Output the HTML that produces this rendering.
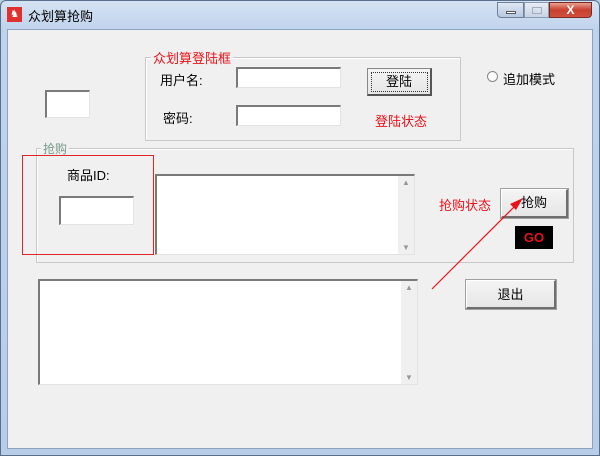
<!DOCTYPE html>
<html><head><meta charset="utf-8"><style>
*{margin:0;padding:0;box-sizing:border-box}
body{width:600px;height:456px;overflow:hidden;background:#bcd1ea;font-family:"Liberation Sans","Noto Sans CJK SC",sans-serif;font-size:12px;color:#000;position:relative}
.a{position:absolute}
.frame{left:0;top:0;width:600px;height:456px;background:linear-gradient(#d5e3f3,#bfd3ec 30px,#b8cde8);border:1px solid #5a6f8c;border-radius:6px 6px 0 0}
.client{left:7px;top:29px;width:586px;height:420px;background:#f0f0f0;border:1px solid #8ea3bf}
.inp{background:#fff;border-top:2px solid #7a7a7a;border-left:2px solid #7a7a7a;border-right:1px solid #e3e3e3;border-bottom:1px solid #e3e3e3}
.grp{border:1px solid #c8c8c8;box-shadow:1px 1px 0 #fff inset}
.btn{background:linear-gradient(#f4f4f4,#e6e6e6);border:1px solid #fff;border-right:2px solid #6e6e6e;border-bottom:2px solid #6e6e6e;outline:1px solid #a0a0a0;text-align:center;font-size:13px}
.red{color:#e8121a}
.sb{right:0;top:0;bottom:0;width:16px;background:#f0f0f0;font-size:8px;color:#999;text-align:center}
</style></head><body>
<div class="a frame"></div>
<div class="a" style="left:7px;top:7px;width:15px;height:15px;background:#e03030;color:#fff;font-size:10px;text-align:center;line-height:15px">♞</div>
<div class="a" style="left:28px;top:6px;font-size:13px">众划算抢购</div>
<div class="a" style="left:497px;top:2px;width:27px;height:16px;border:1px solid #6d7f99;border-radius:0 0 0 4px;background:linear-gradient(#dfe8f4,#b7c8df)"><div class="a" style="left:8px;top:8px;width:10px;height:3px;background:#fff;border:1px solid #556"></div></div>
<div class="a" style="left:524px;top:2px;width:25px;height:16px;border:1px solid #8a9ab0;background:linear-gradient(#e6edf6,#c6d4e6)"><div class="a" style="left:7px;top:4px;width:10px;height:7px;border:1px solid #aab"></div></div>
<div class="a" style="left:549px;top:2px;width:43px;height:16px;border:1px solid #7a2a20;border-radius:0 0 4px 0;background:linear-gradient(#e8a090,#c8402e 50%,#d05040);color:#fff;font-weight:bold;text-align:center;line-height:14px;font-size:12px">X</div>
<div class="a client"></div>

<div class="a inp" style="left:45px;top:90px;width:45px;height:28px"></div>

<div class="a grp" style="left:145px;top:57px;width:316px;height:84px"></div>
<div class="a red" style="left:151px;top:48px;background:#f0f0f0;padding:0 2px;font-size:13px">众划算登陆框</div>
<div class="a" style="left:160px;top:70px;font-size:13px">用户名:</div>
<div class="a inp" style="left:236px;top:67px;width:105px;height:21px"></div>
<div class="a btn" style="left:367px;top:68px;width:65px;height:28px;line-height:26px;outline:1px dotted #333;outline-offset:-5px;border:1px solid #888;border-right:2px solid #555;border-bottom:2px solid #555">登陆</div>
<div class="a" style="left:163px;top:108px;font-size:13px">密码:</div>
<div class="a inp" style="left:236px;top:105px;width:105px;height:21px"></div>
<div class="a red" style="left:375px;top:111px;font-size:13px">登陆状态</div>

<div class="a" style="left:487px;top:71px;width:11px;height:11px;border-radius:50%;border:1px solid #888;background:#fafafa"></div>
<div class="a" style="left:503px;top:69px;font-size:13px">追加模式</div>

<div class="a grp" style="left:36px;top:148px;width:538px;height:115px"></div>
<div class="a" style="left:41px;top:140px;background:#f0f0f0;padding:0 2px;color:#7a9a8a;font-size:12px">抢购</div>
<div class="a" style="left:22px;top:155px;width:132px;height:100px;border:1px solid #e0242a"></div>
<div class="a" style="left:67px;top:165px;font-size:13px">商品ID:</div>
<div class="a inp" style="left:59px;top:196px;width:75px;height:29px"></div>
<div class="a inp" style="left:155px;top:174px;width:260px;height:81px"><div class="a sb" style="padding-top:2px">▲<div class="a" style="bottom:2px;left:0;width:16px">▼</div></div></div>
<div class="a red" style="left:439px;top:195px;font-size:13px">抢购状态</div>
<div class="a btn" style="left:501px;top:189px;width:67px;height:29px;line-height:26px">抢购</div>
<div class="a" style="left:515px;top:226px;width:38px;height:23px;background:#000;color:#e8121a;font-weight:bold;text-align:center;line-height:23px;font-size:13px">GO</div>

<div class="a inp" style="left:38px;top:279px;width:380px;height:106px"><div class="a sb" style="padding-top:2px">▲<div class="a" style="bottom:2px;left:0;width:16px">▼</div></div></div>
<div class="a btn" style="left:466px;top:280px;width:90px;height:29px;line-height:27px">退出</div>

<svg class="a" style="left:0;top:0" width="600" height="456"><line x1="432" y1="289" x2="518" y2="203" stroke="#e8121a" stroke-width="1.2"/><polygon points="523,198 510,204 516,210" fill="#e8121a"/></svg>
</body></html>
